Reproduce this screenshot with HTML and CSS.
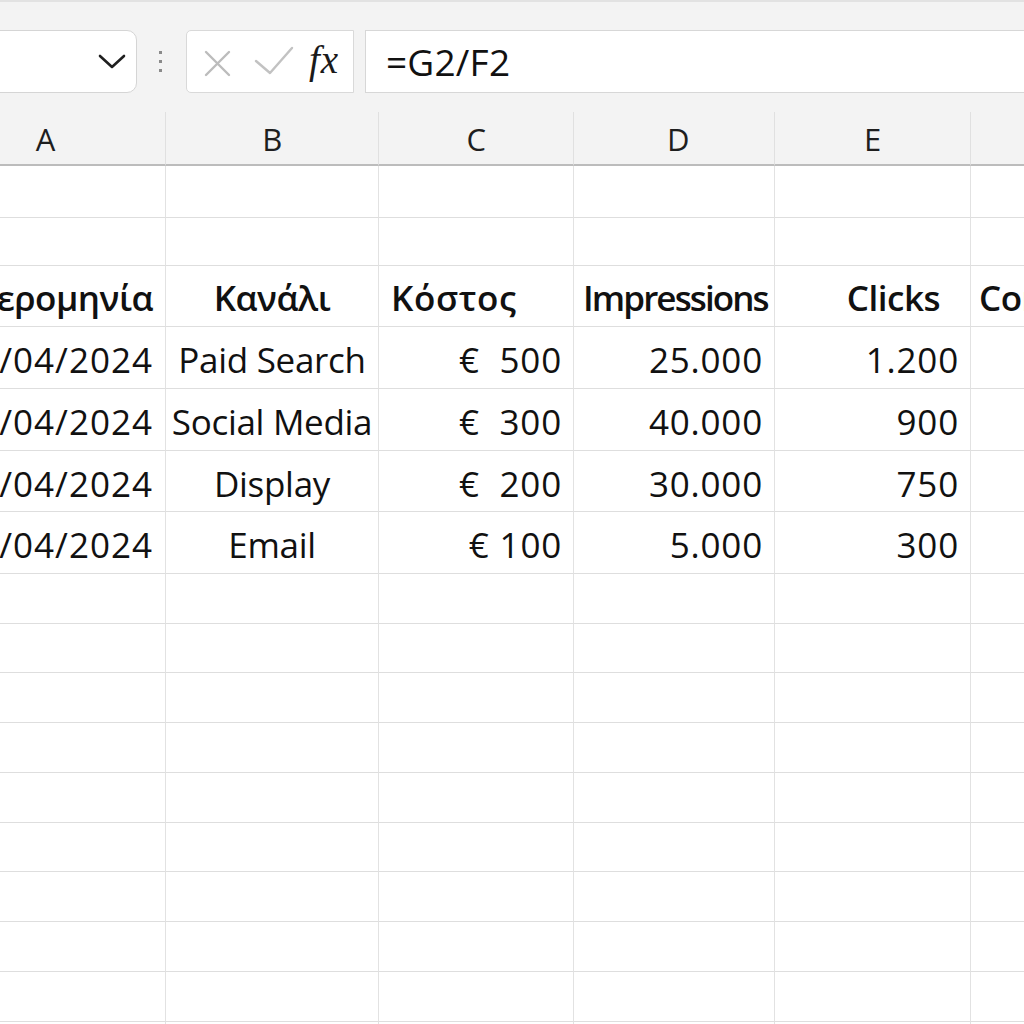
FILE: index.html
```html
<!DOCTYPE html>
<html lang="el">
<head>
<meta charset="utf-8">
<title>Sheet</title>
<link rel="stylesheet" href="styles.css">
</head>
<body>
<div class="app">
  <div class="toolbar">
    <div class="namebox">
      <svg class="chev" width="28" height="16" viewBox="0 0 28 16"><polyline points="2,2 14,13 26,2" fill="none" stroke="#1f1f1f" stroke-width="2.6" stroke-linecap="round" stroke-linejoin="round"/></svg>
    </div>
    <div class="dots"><span></span><span></span><span></span></div>
    <div class="fbuttons">
      <svg class="icon-x" width="28" height="28" viewBox="0 0 28 28"><path d="M3 3 L26 26 M26 3 L3 26" stroke="#bcbcbc" stroke-width="2.4" stroke-linecap="round"/></svg>
      <svg class="icon-check" width="40" height="32" viewBox="0 0 40 32"><polyline points="2,16 16,28 38,3" fill="none" stroke="#c2c2c2" stroke-width="2.4" stroke-linecap="round" stroke-linejoin="round"/></svg>
      <span class="fx">fx</span>
    </div>
    <div class="formula">=G2/F2</div>
  </div>

  <div class="sheet">
    <div class="row colhead">
      <div class="c">A</div><div class="c">B</div><div class="c">C</div><div class="c dcol">D</div><div class="c">E</div><div class="c"></div>
    </div>
    <div class="row h52"><div class="c"></div><div class="c"></div><div class="c"></div><div class="c"></div><div class="c"></div><div class="c"></div></div>
    <div class="row h48"><div class="c"></div><div class="c"></div><div class="c"></div><div class="c"></div><div class="c"></div><div class="c"></div></div>
    <div class="row h61 bold">
      <div class="c right">Ημερομηνία</div>
      <div class="c center">Κανάλι</div>
      <div class="c left cost">Κόστος</div>
      <div class="c left imp">Impressions</div>
      <div class="c right clicks">Clicks</div>
      <div class="c left">Conversions</div>
    </div>
    <div class="row h62">
      <div class="c right date">01/04/2024</div><div class="c center">Paid Search</div><div class="c right num">€&nbsp;&nbsp;500</div><div class="c right num">25.000</div><div class="c right num">1.200</div><div class="c"></div>
    </div>
    <div class="row h62">
      <div class="c right date">01/04/2024</div><div class="c center">Social Media</div><div class="c right num">€&nbsp;&nbsp;300</div><div class="c right num">40.000</div><div class="c right num">900</div><div class="c"></div>
    </div>
    <div class="row h61">
      <div class="c right date">01/04/2024</div><div class="c center">Display</div><div class="c right num">€&nbsp;&nbsp;200</div><div class="c right num">30.000</div><div class="c right num">750</div><div class="c"></div>
    </div>
    <div class="row h62">
      <div class="c right date">01/04/2024</div><div class="c center">Email</div><div class="c right num">€&nbsp;100</div><div class="c right num">5.000</div><div class="c right num">300</div><div class="c"></div>
    </div>
    <div class="row h50"><div class="c"></div><div class="c"></div><div class="c"></div><div class="c"></div><div class="c"></div><div class="c"></div></div>
    <div class="row h49"><div class="c"></div><div class="c"></div><div class="c"></div><div class="c"></div><div class="c"></div><div class="c"></div></div>
    <div class="row h50"><div class="c"></div><div class="c"></div><div class="c"></div><div class="c"></div><div class="c"></div><div class="c"></div></div>
    <div class="row h50"><div class="c"></div><div class="c"></div><div class="c"></div><div class="c"></div><div class="c"></div><div class="c"></div></div>
    <div class="row h50"><div class="c"></div><div class="c"></div><div class="c"></div><div class="c"></div><div class="c"></div><div class="c"></div></div>
    <div class="row h49"><div class="c"></div><div class="c"></div><div class="c"></div><div class="c"></div><div class="c"></div><div class="c"></div></div>
    <div class="row h50"><div class="c"></div><div class="c"></div><div class="c"></div><div class="c"></div><div class="c"></div><div class="c"></div></div>
    <div class="row h50"><div class="c"></div><div class="c"></div><div class="c"></div><div class="c"></div><div class="c"></div><div class="c"></div></div>
    <div class="row h50"><div class="c"></div><div class="c"></div><div class="c"></div><div class="c"></div><div class="c"></div><div class="c"></div></div>
    <div class="row h50"><div class="c"></div><div class="c"></div><div class="c"></div><div class="c"></div><div class="c"></div><div class="c"></div></div>
  </div>
</div>
</body>
</html>
```

FILE: styles.css
```css
* { box-sizing: border-box; }
html, body { margin: 0; padding: 0; }
body {
  width: 1024px;
  height: 1024px;
  overflow: hidden;
  background: #ffffff;
  font-family: "Open Sans", "Noto Sans", sans-serif;
  color: #111111;
}
.app { width: 1024px; }

.toolbar {
  height: 112px;
  background: #f3f3f3;
  border-top: 2px solid #e2e2e2;
  display: flex;
  align-items: flex-start;
  padding-top: 28px;
}
.namebox {
  margin-left: -30px;
  width: 167px;
  height: 63px;
  background: #ffffff;
  border: 1px solid #d5d5d5;
  border-radius: 10px;
  display: flex;
  align-items: center;
  justify-content: flex-end;
  padding-right: 10px;
}
.chev { display: block; }
.dots {
  margin-left: 22px;
  height: 63px;
  display: flex;
  flex-direction: column;
  justify-content: center;
  gap: 6px;
}
.dots span {
  display: block;
  width: 3px;
  height: 3px;
  background: #8a8a8a;
}
.fbuttons {
  margin-left: 24px;
  width: 168px;
  height: 63px;
  background: #ffffff;
  border: 1px solid #d9d9d9;
  border-radius: 5px 0 0 5px;
  display: flex;
  align-items: center;
  padding-left: 16px;
}
.icon-x { display: block; margin-top: 2px; }
.icon-check { display: block; margin-left: 23px; margin-top: -2px; }
.fx {
  margin-left: 15px;
  font-family: "Liberation Serif", "DejaVu Serif", serif;
  font-style: italic;
  font-size: 39px;
  line-height: 1;
  color: #1a1a1a;
  margin-top: -4px;
  letter-spacing: 1px;
}
.formula {
  margin-left: 11px;
  flex: 1;
  margin-right: -20px;
  height: 63px;
  background: #ffffff;
  border: 1px solid #d7d7d7;
  display: flex;
  align-items: center;
  padding-left: 20px;
  font-size: 37px;
  color: #111;
  letter-spacing: 0.2px;
}

.sheet { width: 1024px; }
.row {
  display: grid;
  grid-template-columns: 166px 213px 195px 201px 196px 1fr;
}
.c {
  border-right: 1px solid #e2e2e2;
  border-bottom: 1px solid #dedede;
  display: flex;
  align-items: center;
  font-size: 35px;
  white-space: nowrap;
  padding: 4px 12px 0 12px;
  min-width: 0;
  overflow: visible;
  letter-spacing: -0.3px;
}
.colhead {
  height: 54px;
  background: #f3f3f3;
}
.colhead .c {
  justify-content: center;
  font-size: 31px;
  border-bottom: 2px solid #bcbcbc;
  border-right: 1px solid #e0e0e0;
  color: #1e1e1e;
  padding-top: 2px;
}
.colhead .c:first-child { padding-left: 0; padding-right: 74px; }
.colhead .dcol { padding-left: 20px; }
.h52 { height: 52px; }
.h48 { height: 48px; }
.h61 { height: 61px; }
.h62 { height: 62px; }
.h50 { height: 50px; }
.h49 { height: 49px; }
.bold .c { font-weight: 600; letter-spacing: -0.5px; padding-top: 2px; }
.bold .cost { letter-spacing: 0.6px; }
.bold .imp { letter-spacing: -1.9px; padding-left: 9px; }
.right { justify-content: flex-end; }
.center { justify-content: center; }
.left { justify-content: flex-start; }
.date { letter-spacing: 1px; }
.num { letter-spacing: 0.8px; padding-right: 11px; }
.clicks { padding-right: 30px; }
.row > .c:last-child { border-right: none; padding-left: 8px; }
```
